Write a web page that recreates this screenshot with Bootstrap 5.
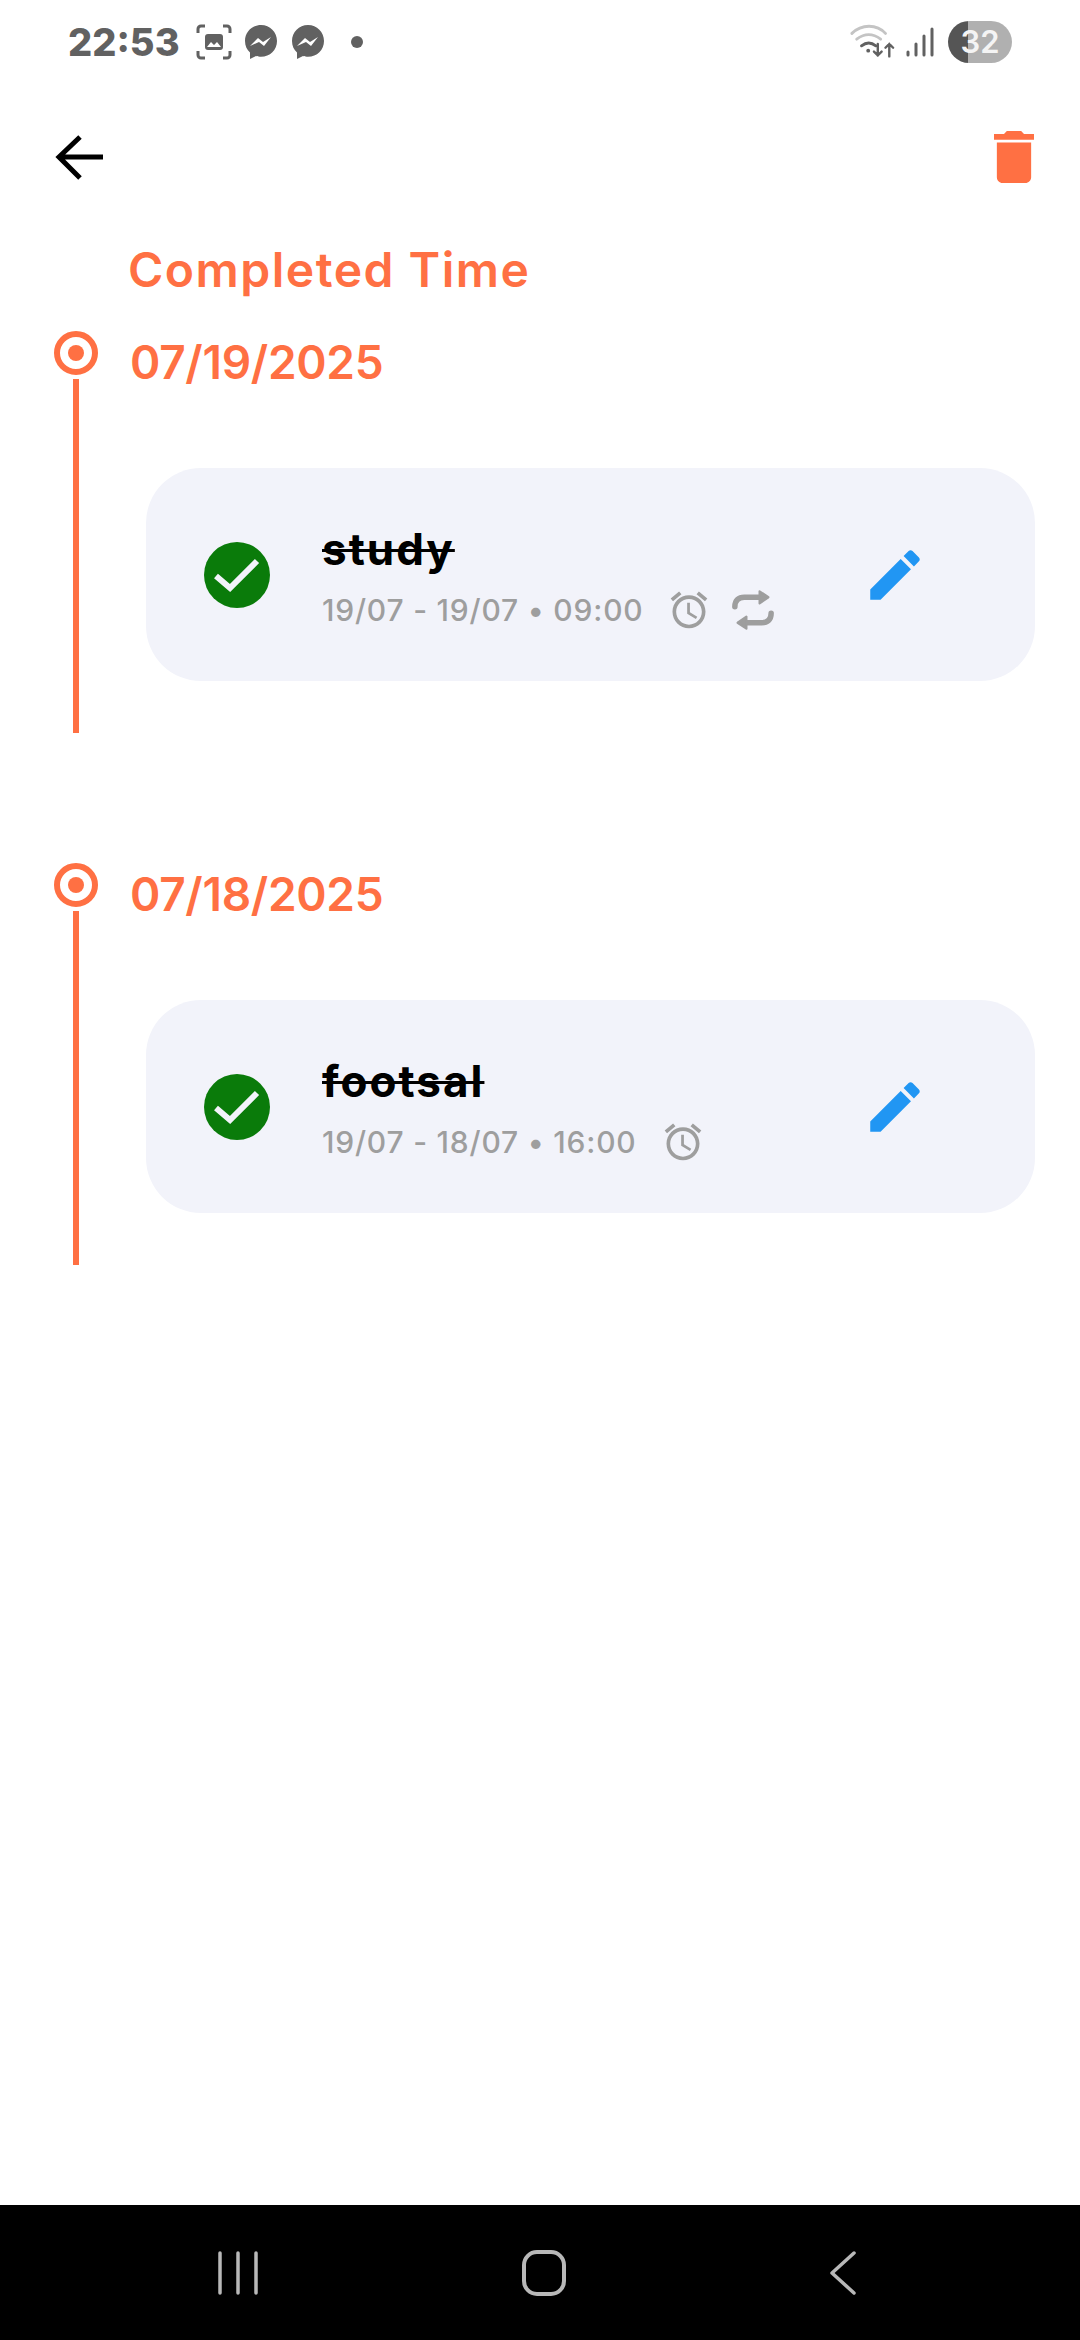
<!DOCTYPE html>
<html lang="en">
<head>
    <meta charset="UTF-8">
    <meta name="viewport" content="width=device-width, initial-scale=1.0">
    <title>Completed Time</title>
    <link rel="stylesheet" href="https://cdn.jsdelivr.net/npm/bootstrap@5.3.0/dist/css/bootstrap.min.css">
    <style>
        body {
            background: #fff;
            font-family: "Inter", "Liberation Sans", sans-serif;
        }
        .screen {
            width: 1080px;
            height: 2340px;
            overflow: hidden;
        }
        .status-row {
            height: 84px;
            padding: 0 68px 0 68px;
            color: #616161;
        }
        .status-time {
            font-size: 38px;
            font-weight: 800;
            line-height: 84px;
            width: 128px;
        }
        .msg-one { margin-left: 12px; }
        .msg-two { margin-left: 13px; }
        .status-dot { margin-left: 25px; }
        .signal-icon { margin-left: 10px; }
        .battery-pill {
            width: 64px;
            height: 42px;
            margin-left: 14px;
            border-radius: 21px;
            background: linear-gradient(90deg, #555 0 20px, #b0b0b0 20px);
            color: #f4f4f4;
            font-size: 31px;
            font-weight: 600;
            line-height: 42px;
            text-align: center;
        }
        .top-row {
            height: 145px;
            padding: 0 46px 0 53px;
        }
        .page-title {
            color: #ff7043;
            font-size: 48px;
            font-weight: 600;
            line-height: 60px;
            margin: 11px 0 31px 128px;
            letter-spacing: 1.5px;
        }
        .day-block {
            padding-left: 54px;
        }
        .day-block + .day-block {
            margin-top: 130px;
        }
        .day-rail {
            width: 44px;
        }
        .day-dot {
            width: 44px;
            height: 44px;
            border: 6px solid #ff7043;
            border-radius: 50%;
        }
        .day-dot::after {
            content: "";
            width: 16px;
            height: 16px;
            border-radius: 50%;
            background: #ff7043;
            margin: 8px;
            display: block;
        }
        .day-line {
            width: 6px;
            height: 354px;
            margin-top: 4px;
            background: #ff7043;
        }
        .day-body {
            width: 937px;
            padding-left: 48px;
        }
        .day-date {
            color: #ff7043;
            font-size: 46px;
            font-weight: 600;
            line-height: 56px;
            letter-spacing: -.3px;
            margin: 3px 0 0 -16px;
        }
        .task-box {
            width: 889px;
            height: 213px;
            margin-top: 78px;
            background: #f2f3fa;
            border-radius: 55px;
            padding-left: 58px;
        }
        .task-check {
            width: 66px;
            height: 66px;
            margin-right: 52px;
        }
        .task-info {
            width: 546px;
            padding-top: 7px;
        }
        .task-name {
            color: #000;
            font-size: 44px;
            font-weight: 700;
            line-height: 50px;
            letter-spacing: 2px;
            text-decoration: line-through;
            text-decoration-thickness: 3px;
        }
        .task-meta {
            color: #9e9e9e;
            font-size: 30px;
            font-weight: 500;
            line-height: 40px;
            letter-spacing: .8px;
            margin-top: 14px;
        }
        .alarm-icon { margin-left: 24px; }
        .repeat-icon { margin-left: 20px; }
        .edit-icon { margin-left: -6px; }
        .nav-row {
            height: 135px;
            margin-top: auto;
            padding: 0 223px 0 217px;
            background: #000;
        }
    </style>
</head>
<body>
    <div class="screen d-flex flex-column">
        <div class="status-row d-flex align-items-center">
            <span class="status-time">22:53</span>
            <svg width="36" height="36" viewBox="0 0 36 36" fill="none" stroke="#616161" stroke-width="3">
                <path d="M2 9V5a3 3 0 0 1 3-3h4M27 2h4a3 3 0 0 1 3 3v4M34 27v4a3 3 0 0 1-3 3h-4M9 34H5a3 3 0 0 1-3-3v-4"/>
                <rect x="9" y="10" width="18" height="16" rx="3" fill="#616161" stroke="none"/>
                <path d="M11 23l4-5 3 3 3-3 4 5z" fill="#fff" stroke="none"/>
            </svg>
            <svg class="msg-one" width="34" height="36" viewBox="0 0 34 36">
                <path d="M17 1C8 1 1 8 1 17c0 5 2 9 5 11.500V35l6-3c2 .6 3.300.8 5 .8 9 0 16-6.800 16-15.800S26 1 17 1z" fill="#616161"/>
                <path d="M6 22l8-8 5 4 8-5-7 9-5-4-9 4z" fill="#fff"/>
            </svg>
            <svg class="msg-two" width="34" height="36" viewBox="0 0 34 36">
                <path d="M17 1C8 1 1 8 1 17c0 5 2 9 5 11.500V35l6-3c2 .6 3.300.8 5 .8 9 0 16-6.800 16-15.800S26 1 17 1z" fill="#616161"/>
                <path d="M6 22l8-8 5 4 8-5-7 9-5-4-9 4z" fill="#fff"/>
            </svg>
            <svg class="status-dot" width="14" height="14" viewBox="0 0 14 14"><circle cx="7" cy="7" r="6" fill="#616161"/></svg>
            <div class="ms-auto d-flex align-items-center">
                <svg width="46" height="36" viewBox="0 0 48 36" fill="none" stroke-linecap="round">
                    <path d="M2 9C12-1 28-1 37 9" stroke="#c4c4c4" stroke-width="3"/>
                    <path d="M7 15c8-6 17-6 25 0" stroke="#c4c4c4" stroke-width="3"/>
                    <path d="M12 22c5-4 10-4 15 0" stroke="#616161" stroke-width="3"/>
                    <circle cx="19" cy="27" r="2" fill="#616161"/>
                    <path d="M29 20v12m-4-4 4 4 4-4M41 33V20m-4 4 4-4 4 4" stroke="#616161" stroke-width="2.500"/>
                </svg>
                <svg class="signal-icon" width="28" height="30" viewBox="0 0 28 30" stroke="#616161" stroke-width="3" stroke-linecap="round">
                    <path d="M2 28v-3M10 28v-11M18 28V9M26 28V2"/>
                </svg>
                <span class="battery-pill">32</span>
            </div>
        </div>
        <div class="top-row d-flex align-items-center justify-content-between">
            <svg width="52" height="52" viewBox="0 0 52 52" fill="none" stroke="#000" stroke-width="5">
                <path d="M50 26H7M27 6 6 26l21 21"/>
            </svg>
            <svg width="40" height="52" viewBox="5 3 14 18" fill="#ff7043" preserveAspectRatio="none">
                <path d="M6 19c0 1.100.9 2 2 2h8c1.100 0 2-.9 2-2V7H6v12zM19 4h-3.500l-1-1h-5l-1 1H5v2h14V4z"/>
            </svg>
        </div>
        <h1 class="page-title">Completed Time</h1>

        <div class="day-block d-flex">
            <div class="day-rail d-flex flex-column align-items-center flex-shrink-0">
                <div class="day-dot"></div>
                <div class="day-line"></div>
            </div>
            <div class="day-body">
                <div class="day-date">07/19/2025</div>
                <div class="task-box d-flex align-items-center">
                    <svg class="task-check flex-shrink-0" viewBox="0 0 66 66">
                        <circle cx="33" cy="33" r="33" fill="#0a7b0a"/>
                        <path d="M12 34l14 12 27-27" fill="none" stroke="#f2f3fa" stroke-width="6"/>
                    </svg>
                    <div class="task-info flex-shrink-0">
                        <div class="task-name">study</div>
                        <div class="task-meta d-flex align-items-center">
                            <span>19/07 - 19/07 • 09:00</span>
                            <svg class="alarm-icon" width="44" height="44" viewBox="0 0 24 24" fill="#9e9e9e">
                                <path d="M22 5.720l-4.600-3.860-1.290 1.530 4.600 3.860L22 5.720zM7.880 3.390L6.600 1.860 2 5.710l1.290 1.530 4.590-3.850zM12.500 8H11v6l4.750 2.850.75-1.230-4-2.370V8zM12 4c-4.970 0-9 4.030-9 9s4.020 9 9 9c4.970 0 9-4.030 9-9s-4.030-9-9-9zm0 16c-3.870 0-7-3.130-7-7s3.130-7 7-7 7 3.130 7 7-3.130 7-7 7z"/>
                            </svg>
                            <svg class="repeat-icon" width="44" height="44" viewBox="0 0 40 40" fill="none" stroke="#9e9e9e" stroke-linecap="round" stroke-linejoin="round">
                                <path d="M3.500 17c0-6 3.500-8.600 8.500-8.600h16M36.500 23c0 6-3.500 8.600-8.500 8.600H12" stroke-width="5"/>
                                <path d="M26 3l8 5.400L26 14zM14 37l-8-5.400L14 26z" fill="#9e9e9e" stroke-width="2"/>
                            </svg>
                        </div>
                    </div>
                    <svg class="edit-icon flex-shrink-0" width="66" height="66" viewBox="0 0 24 24" fill="#2196f3">
                        <path d="M3 17.250V21h3.750L17.810 9.940l-3.750-3.750L3 17.250zM20.710 7.040c.39-.39.39-1.020 0-1.410l-2.340-2.340c-.39-.39-1.020-.39-1.410 0l-1.830 1.830 3.750 3.750 1.830-1.830z"/>
                    </svg>
                </div>
            </div>
        </div>

        <div class="day-block d-flex">
            <div class="day-rail d-flex flex-column align-items-center flex-shrink-0">
                <div class="day-dot"></div>
                <div class="day-line"></div>
            </div>
            <div class="day-body">
                <div class="day-date">07/18/2025</div>
                <div class="task-box d-flex align-items-center">
                    <svg class="task-check flex-shrink-0" viewBox="0 0 66 66">
                        <circle cx="33" cy="33" r="33" fill="#0a7b0a"/>
                        <path d="M12 34l14 12 27-27" fill="none" stroke="#f2f3fa" stroke-width="6"/>
                    </svg>
                    <div class="task-info flex-shrink-0">
                        <div class="task-name">footsal</div>
                        <div class="task-meta d-flex align-items-center">
                            <span>19/07 - 18/07 • 16:00</span>
                            <svg class="alarm-icon" width="44" height="44" viewBox="0 0 24 24" fill="#9e9e9e">
                                <path d="M22 5.720l-4.600-3.860-1.290 1.530 4.600 3.860L22 5.720zM7.880 3.390L6.600 1.860 2 5.710l1.290 1.530 4.590-3.850zM12.500 8H11v6l4.750 2.850.75-1.230-4-2.370V8zM12 4c-4.970 0-9 4.030-9 9s4.020 9 9 9c4.970 0 9-4.030 9-9s-4.030-9-9-9zm0 16c-3.870 0-7-3.130-7-7s3.130-7 7-7 7 3.130 7 7-3.130 7-7 7z"/>
                            </svg>
                        </div>
                    </div>
                    <svg class="edit-icon flex-shrink-0" width="66" height="66" viewBox="0 0 24 24" fill="#2196f3">
                        <path d="M3 17.250V21h3.750L17.810 9.940l-3.750-3.750L3 17.250zM20.710 7.040c.39-.39.39-1.020 0-1.410l-2.340-2.340c-.39-.39-1.020-.39-1.410 0l-1.830 1.830 3.750 3.750 1.830-1.830z"/>
                    </svg>
                </div>
            </div>
        </div>

        <div class="nav-row d-flex align-items-center justify-content-between flex-shrink-0">
            <svg width="42" height="44" viewBox="0 0 42 44" stroke="#b8b8b8" stroke-width="3.500" stroke-linecap="round">
                <path d="M3 2v40M21 2v40M39 2v40"/>
            </svg>
            <svg width="44" height="46" viewBox="0 0 44 46" fill="none" stroke="#b8b8b8" stroke-width="4">
                <rect x="2" y="2" width="40" height="42" rx="13"/>
            </svg>
            <svg width="28" height="46" viewBox="0 0 28 46" fill="none" stroke="#b8b8b8" stroke-width="3.500" stroke-linecap="round" stroke-linejoin="round">
                <path d="M25 3 3 23l22 20"/>
            </svg>
        </div>
    </div>
    <script src="https://cdn.jsdelivr.net/npm/bootstrap@5.3.0/dist/js/bootstrap.bundle.min.js"></script>
</body>
</html>
